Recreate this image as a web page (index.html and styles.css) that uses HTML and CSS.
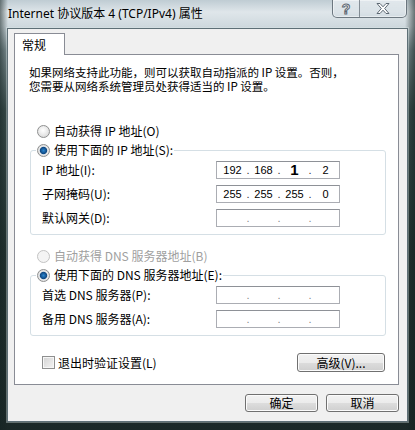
FILE: index.html
```html
<!DOCTYPE html>
<html lang="zh-CN">
<head>
    <meta charset="UTF-8">
    <title>Internet 协议版本 4 (TCP/IPv4) 属性</title>
    <link rel="stylesheet" href="styles.css">
</head>
<body>
    <div class="window">
        <div class="titlebar">
            <span class="title">Internet 协议版本 4 (TCP/IPv4) 属性</span>
            <div class="caption">
                <span class="cap-btn cap-help">?</span>
                <span class="cap-btn cap-close">
                    <svg width="14" height="11" viewBox="0 0 14 11">
                        <polygon points="1,0.5 4,0.5 7,3.8 10,0.5 13,0.5 8.7,5.5 13,10.5 10,10.5 7,7.2 4,10.5 1,10.5 5.3,5.5" fill="#fff" stroke="#5d6873" stroke-width="1" stroke-linejoin="round"/>
                    </svg>
                </span>
            </div>
        </div>

        <div class="client">
            <div class="tabs">
                <div class="tab">常规</div>
            </div>
            <div class="panel">
                <p class="intro">如果网络支持此功能，则可以获取自动指派的 IP 设置。否则，</p>
                <p class="intro">您需要从网络系统管理员处获得适当的 IP 设置。</p>

                <div class="option first-option">
                    <span class="radio"></span>
                    <span>自动获得 IP 地址(O)</span>
                </div>

                <fieldset class="group">
                    <legend class="option">
                        <span class="radio checked"></span>
                        <span>使用下面的 IP 地址(S):</span>
                    </legend>
                    <div class="rows">
                        <div class="row">
                            <label>IP 地址(I):</label>
                            <div class="ipbox">
                                <span class="seg">192</span><span class="dot">.</span><span class="seg">168</span><span class="dot">.</span><span class="seg big">1</span><span class="dot">.</span><span class="seg">2</span>
                            </div>
                        </div>
                        <div class="row">
                            <label>子网掩码(U):</label>
                            <div class="ipbox">
                                <span class="seg">255</span><span class="dot">.</span><span class="seg">255</span><span class="dot">.</span><span class="seg">255</span><span class="dot">.</span><span class="seg">0</span>
                            </div>
                        </div>
                        <div class="row">
                            <label>默认网关(D):</label>
                            <div class="ipbox empty">
                                <span class="seg"></span><span class="dot">.</span><span class="seg"></span><span class="dot">.</span><span class="seg"></span><span class="dot">.</span><span class="seg"></span>
                            </div>
                        </div>
                    </div>
                </fieldset>

                <div class="option dns-option disabled">
                    <span class="radio"></span>
                    <span>自动获得 DNS 服务器地址(B)</span>
                </div>

                <fieldset class="group">
                    <legend class="option">
                        <span class="radio checked"></span>
                        <span>使用下面的 DNS 服务器地址(E):</span>
                    </legend>
                    <div class="rows">
                        <div class="row">
                            <label>首选 DNS 服务器(P):</label>
                            <div class="ipbox empty">
                                <span class="seg"></span><span class="dot">.</span><span class="seg"></span><span class="dot">.</span><span class="seg"></span><span class="dot">.</span><span class="seg"></span>
                            </div>
                        </div>
                        <div class="row">
                            <label>备用 DNS 服务器(A):</label>
                            <div class="ipbox empty">
                                <span class="seg"></span><span class="dot">.</span><span class="seg"></span><span class="dot">.</span><span class="seg"></span><span class="dot">.</span><span class="seg"></span>
                            </div>
                        </div>
                    </div>
                </fieldset>

                <div class="check-row">
                    <div class="check">
                        <span class="checkbox"></span>
                        <span>退出时验证设置(L)</span>
                    </div>
                    <button class="btn btn-adv">高级(V)...</button>
                </div>
            </div>

            <div class="footer">
                <button class="btn btn-foot">确定</button>
                <button class="btn btn-foot">取消</button>
            </div>
        </div>
    </div>
</body>
</html>
```

FILE: styles.css
```css
* {
    box-sizing: border-box;
}
html, body {
    margin: 0;
    padding: 0;
    background: #1c2928;
}
body {
    font-family: "Noto Sans CJK SC", "Noto Sans", sans-serif;
    font-size: 12px;
    color: #000;
}
.window {
    width: 415px;
    height: 430px;
    padding: 0 7px 8px 7px;
    background:
        linear-gradient(90deg, rgba(20, 35, 34, 0.55) 0, rgba(20, 35, 34, 0) 8px, rgba(20, 35, 34, 0) 405px, rgba(20, 35, 34, 0.6) 415px),
        linear-gradient(180deg, #bfccd3 0, #dfe6ea 12px, #cfd9de 26px, #7d8e92 50px, #3a4c4b 110px, #223230 250px, #1b2827 100%);
}
.titlebar {
    height: 28px;
    display: flex;
    align-items: flex-start;
    padding-left: 1px;
}
.title {
    font-family: "Noto Sans", "Noto Sans CJK SC", sans-serif;
    font-size: 12px;
    line-height: 28px;
    color: #000;
}
.caption {
    margin-left: auto;
    margin-right: 1px;
    display: flex;
    height: 18px;
    border: 1px solid rgba(70, 82, 92, 0.75);
    border-top: none;
    border-radius: 0 0 5px 5px;
    background: linear-gradient(180deg, rgba(240, 244, 247, 0.7), rgba(205, 215, 222, 0.6));
    box-shadow: inset 0 0 0 1px rgba(255, 255, 255, 0.45);
}
.cap-btn {
    display: flex;
    align-items: center;
    justify-content: center;
    height: 17px;
}
.cap-help {
    width: 27px;
    border-right: 1px solid rgba(70, 82, 92, 0.6);
    font-family: "Liberation Sans", sans-serif;
    font-weight: bold;
    font-size: 14px;
    color: #fff;
    -webkit-text-stroke: 1px #5d6873;
}
.cap-close {
    width: 46px;
}
.client {
    height: 394px;
    background: #f0f0f0;
    border: 1px solid #5e6f76;
    box-shadow: 0 0 0 1px rgba(230, 240, 240, 0.35);
    padding: 4px 8px 8px 6px;
}
.tabs {
    display: flex;
    height: 21px;
}
.tab {
    position: relative;
    z-index: 1;
    width: 51px;
    height: 22px;
    background: #fff;
    border: 1px solid #898c95;
    border-bottom: none;
    padding-left: 7px;
    line-height: 21px;
}
.panel {
    background: #fff;
    border: 1px solid #898c95;
    padding: 10px 12px 12px 15px;
}
.intro {
    margin: 0 0 0 -1px;
    height: 14px;
    line-height: 14px;
    font-size: 11.5px;
    white-space: nowrap;
}
.option {
    display: flex;
    align-items: center;
    height: 14px;
    line-height: 14px;
    white-space: nowrap;
}
.first-option {
    margin-top: 31px;
    padding-left: 7px;
}
.dns-option {
    margin-top: 14px;
    padding-left: 7px;
}
.disabled {
    color: #a0a0a0;
}
.radio {
    width: 13px;
    height: 13px;
    border-radius: 50%;
    border: 1px solid #8e8f8f;
    background: radial-gradient(circle at 45% 40%, #ffffff 0, #f0f0f0 35%, #cfcfcf 100%);
    margin-right: 4px;
    flex: none;
}
.radio.checked {
    background: radial-gradient(circle at 50% 50%, #2a86d0 0, #1b5f9e 2px, #0f4a85 3.2px, #eaeaea 4.2px, #d0d0d0 100%);
}
.disabled .radio {
    border-color: #c3c3c3;
    background: #f4f4f4;
}
.group {
    margin: 5px 0 0 0;
    padding: 4px 0 7px 0;
    min-width: 0;
    border: 1px solid #d5dfe5;
    border-radius: 3px;
}
.group legend {
    margin-left: 5px;
    padding: 0 1px;
}
.rows {
    display: flex;
    flex-direction: column;
    gap: 6px;
    padding-left: 11px;
}
.row {
    display: grid;
    grid-template-columns: 174px 124px;
    height: 18px;
    align-items: center;
}
.row label {
    line-height: 18px;
    white-space: nowrap;
}
.ipbox {
    display: flex;
    align-items: center;
    height: 18px;
    padding-left: 3px;
    background: #fff;
    border: 1px solid #abadb3;
    border-top-color: #8e9197;
    font-family: "Liberation Sans", sans-serif;
    font-size: 11px;
    line-height: 16px;
}
.seg {
    width: 25px;
    text-align: center;
}
.seg.big {
    font-size: 15px;
    font-weight: bold;
}
.dot {
    width: 6px;
    text-align: center;
    color: #333;
}
.empty .dot {
    color: #888;
}
.check-row {
    display: flex;
    align-items: center;
    justify-content: space-between;
    margin-top: 17px;
    padding: 0 1px 0 12px;
    height: 19px;
}
.check {
    display: flex;
    align-items: center;
    gap: 3px;
    line-height: 14px;
}
.checkbox {
    width: 13px;
    height: 13px;
    border: 1px solid #8e8f8f;
    background: linear-gradient(135deg, #d2d2d2, #f4f4f4);
    box-shadow: inset 0 0 0 1px #f6f6f6;
}
.btn {
    font-family: "Noto Sans CJK SC", sans-serif;
    font-size: 12px;
    line-height: 16px;
    padding: 0;
    color: #000;
    border: 1px solid #707070;
    border-radius: 3px;
    background: linear-gradient(180deg, #f2f2f2 0, #ebebeb 50%, #dddddd 50%, #cfcfcf 100%);
    box-shadow: inset 0 0 0 1px #fbfbfb;
}
.btn-adv {
    width: 88px;
    height: 19px;
}
.footer {
    display: flex;
    justify-content: flex-end;
    gap: 8px;
    margin-top: 9px;
}
.btn-foot {
    width: 73px;
    height: 18px;
}
```
